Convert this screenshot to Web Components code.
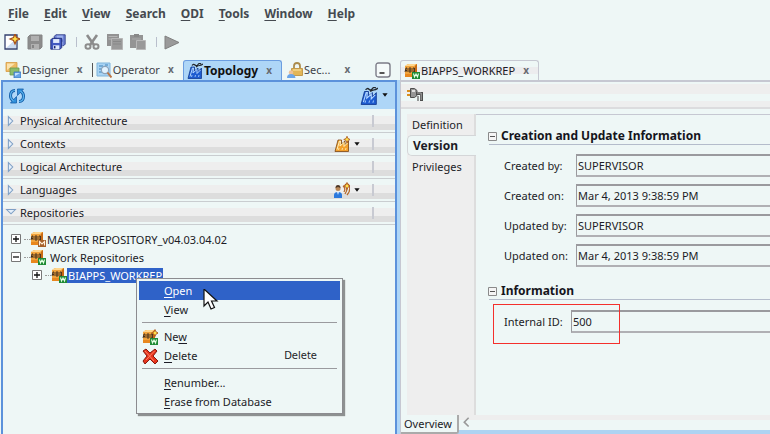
<!DOCTYPE html>
<html lang="en">
<head>
<meta charset="utf-8">
<title>ODI Topology</title>
<style>
html, body { margin: 0; height: 100%; }
body { background: #eef7f6; overflow: hidden; color: #1c1c26; font: 11px/16px "Noto Sans", "Open Sans", sans-serif; }
</style>
</head>
<body>
<odi-app></odi-app>
<script>
const define = (name, css, html, setup) => customElements.define(name, class extends HTMLElement {
  connectedCallback() {
    if (this.shadowRoot) return;
    const root = this.attachShadow({ mode: 'open' });
    const attr = key => this.getAttribute(key) || '';
    root.innerHTML = `<style>*{box-sizing:border-box}button{font:inherit;color:inherit;background:none;border:0;margin:0;padding:0;text-align:left}u{text-underline-offset:2px}${css}</style>` +
      (typeof html === 'function' ? html(attr) : html);
    if (setup) setup(this, root);
  }
});

const repo = (badge) => `<path d="M1 3l3-2h9v10l-2 3H1z" fill="#f1a33c"/><path d="M2 2l3-1h7l-2 2H2z" fill="#ffd68c"/><path d="M11 3l2-2v10l-2 3z" fill="#c96a12"/><path d="M1 11h10v3H1z" fill="#e8871e"/><path d="M1 9l1-4h1v4M1 7.500h2M5 9V5h2v4H5m0-2h2M9 5v4m0-4h1.500v4H9" fill="none" stroke="#3c2a1c" stroke-width=".9"/>${badge}`;
const greenBadge = '<path d="M8 9h8v7H8z" fill="#1f8a35"/><path d="M9.500 10.500l1 3.500 1.500-3 1.500 3 1-3.500" fill="none" stroke="#e4ffe4" stroke-width="1.100"/>';
const brownBadge = '<path d="M8 9h8v7H8z" fill="#a5602a"/><path d="M9.500 14.500v-4l2.500 2.500 2.500-2.500v4" fill="none" stroke="#fff0dc" stroke-width="1.100"/>';
const factory = (fill, light, dark) => `<path d="M1 15.500L4 4h3.500L7.500 8l3.500-3v3.500L14.500 5v10.500z" fill="${fill}" stroke="${dark}" stroke-width=".8"/><path d="M3 13.500L5.500 5h1l-.5 5 4-3.500v4l3.500-3.500" fill="none" stroke="${light}" stroke-width="1"/><path d="M4.500 14l.5-2m3 2l.5-2m3 2l.5-2" stroke="${light}" stroke-width=".8"/>`;
const smoke = '<path d="M5 2.500q1.500-2 3-.5t3-.5 3-.5M9 4q2-1.500 3.500-1.500T16 1" fill="none" stroke="#23272c" stroke-width="1.200"/>';
const floppy = (x, y, s, body, dark, label) => `<g transform="translate(${x} ${y}) scale(${s})"><path d="M1 3l2-2h12v12l-2 2H1z" fill="${body}" stroke="${dark}"/><path d="M4 2h8v5H4z" fill="${label}"/><path d="M4 10h8v5H4z" fill="${label}"/><path d="M5 11h2v3H5z" fill="${dark}"/></g>`;
const star = (x, y, s) => `<path transform="translate(${x} ${y}) scale(${s})" d="M0-5L1.500-1.500 5 0 1.500 1.500 0 5-1.500 1.500-5 0-1.500-1.500z" fill="#ffe14a" stroke="#a8501a" stroke-width="1.200"/>`;
const icons = {
  new: `<path d="M1 1h12v14H1z" fill="#fff" stroke="#33406f" stroke-width="1.300"/><path d="M2 14L12 5v9z" fill="#cddcf2"/>${star(11, 5, 1)}`,
  save: floppy(0, 0, 1, '#8c8c8c', '#858585', '#b0b0b0'),
  saveAll: floppy(3.5, 0, 0.78, '#6f83d4', '#1d2a7c', '#9db2ee') + floppy(0, 3.5, 0.78, '#4058c0', '#141f6c', '#dfeafc'),
  cut: '<path d="M3 1l7 10M13 1L6 11" stroke="#8c8c8c" stroke-width="2.600"/><g fill="none" stroke="#8c8c8c" stroke-width="2"><ellipse cx="4" cy="12.500" rx="2.500" ry="2.300"/><ellipse cx="12" cy="12.500" rx="2.500" ry="2.300"/></g>',
  copy: '<path d="M0 0h12v12H0z" fill="#929292"/><path d="M1.500 2.500h9M1.500 5h8" stroke="#b5b5b5"/><path d="M4.500 4.500h11v11h-11z" fill="#9a9a9a" stroke="#b5b5b5"/><path d="M6 7.500h8M6 10h8" stroke="#888"/>',
  paste: '<path d="M0 1h13v13H0z" fill="#949494"/><path d="M4 0h5v3H4z" fill="#888"/><path d="M6.500 6.500h9v9h-9z" fill="#999" stroke="#b8b8b8"/><path d="M2 5h9" stroke="#aaa"/>',
  play: '<path d="M1 2l14 6.500L1 15z" fill="#9a9a9a" stroke="#808080"/>',
  designer: '<path d="M1 0.500h11v9H1z" fill="#eebb63" stroke="#d59a42" stroke-width=".8"/><path d="M2 1.500h8L2 8z" fill="#fbe3ae"/><path d="M5 6h9v7H5z" fill="#8dbd6a" stroke="#69984e" stroke-width=".8"/><path d="M9 10h7v6H9z" fill="#68a5e5" stroke="#3a75bd" stroke-width=".8"/><path d="M10 11h5l-5 3z" fill="#c2e0ff"/>',
  operator: '<path d="M1 1h13v13H1z" fill="#a9d4f4" stroke="#7fb4dc"/><path d="M3 4h4M3 7h3M3 10h3M9 3h3" stroke="#3d83ba"/><circle cx="9" cy="8" r="3.600" fill="#e2f3ff" stroke="#8ca3ba" stroke-width="1.200"/><path d="M11.500 10.500l4 5" stroke="#bd7645" stroke-width="2"/>',
  topology: factory('#1d5bd0', '#b2d6ff', '#123a92') + smoke,
  security: '<path d="M7 7V4q0-3 3-3t3 3v3" fill="none" stroke="#ab8c4d" stroke-width="1.800"/><path d="M4.500 6.500h11v7h-11z" fill="#e2b657" stroke="#c39a4c"/><path d="M6 8h8" stroke="#fae6a8"/><circle cx="4" cy="10.500" r="2.200" fill="#edc199"/><path d="M0 16q0-4 4-4t4.500 4z" fill="#6ba5e8"/>',
  refresh: '<path d="M6 2.500Q1.500 2.500 1.500 8q0 3 3 5M10 13.500q4.500 0 4.500-5.500 0-3-3-5" fill="none" stroke="#145da8" stroke-width="3"/><path d="M1.500 15h6V8.500zM14.500 1h-6v6.500z" fill="#2f8fdb" stroke="#145da8" stroke-width=".8"/><path d="M6 2.500Q1.500 2.500 1.500 8q0 3 3 5M10 13.500q4.500 0 4.500-5.500 0-3-3-5" fill="none" stroke="#5cb6f0" stroke-width="1.200"/>',
  context: factory('#f3a02c', '#fff2bf', '#7a4614') + star(13, 3.500, 0.65),
  language: '<circle cx="4" cy="6.500" r="2.500" fill="#b88758"/><path d="M1.500 6q0-3 2.500-3t2.500 3L4 5z" fill="#4e3826"/><path d="M0 16v-3q0-3 4-3t4 3v3z" fill="#2c79dd"/><path d="M3 10h2l-1 3z" fill="#d8ebff"/><path d="M9 4q3 2 1 6M11 2q4 4 0 10M14 2q4 5-1 11" fill="none" stroke="#b76b2b" stroke-width="1.300"/>' + star(13, 4, 0.7),
  master: repo(brownBadge),
  work: repo(greenBadge),
  newRepo: repo(greenBadge) + star(13, 4, 0.7),
  delete: '<path d="M1 3l3-2 4 4 5-4 2 2-4 5 5 5-3 3-5-5-5 5-2-3 4-5z" fill="#e8341c" stroke="#86190d"/><path d="M3 3l9 10M12.500 3L4 12" stroke="#ff8064" stroke-width="1"/>',
  plug: '<path d="M0 4h4M0 8h4" stroke="#d98e1f" stroke-width="1.800"/><path d="M3.500 1.500h4l2.500 2v5l-2.500 2h-4z" fill="#969696" stroke="#4d4d4d"/><path d="M5 3h3v2H5z" fill="#e0e0e0"/><path d="M9 6.500h5.500V14" fill="none" stroke="#4d4d4d" stroke-width="3"/><path d="M10 6h4.200v7" fill="none" stroke="#aaa" stroke-width="1"/><path d="M11 9v5" stroke="#777" stroke-width="1.500"/>',
  right: '<path d="M5 3l5 5-5 5z" fill="#e5effa" stroke="#7e9fc5" stroke-width="1.200"/>',
  down: '<path d="M3 4h10l-5 5z" fill="#e5effa" stroke="#7e9fc5" stroke-width="1.200"/>',
  plus: '<path d="M3.500 3.500h9v9h-9z" fill="#fff" stroke="#777"/><path d="M5 8h6M8 5v6" stroke="#111" stroke-width="1.300"/>',
  minus: '<path d="M3.500 3.500h9v9h-9z" fill="#fff" stroke="#777"/><path d="M5 8h6" stroke="#111" stroke-width="1.300"/>',
  fold: '<path d="M3.500 4.500h8v8h-8z" fill="#f5f5f5" stroke="#8a8a8a"/><path d="M5 8.500h5" stroke="#555" stroke-width="1"/>',
  minimize: '<path d="M3.500 1h9q2.500 0 2.500 2.500v9q0 2.500-2.500 2.500h-9Q1 15 1 12.500v-9Q1 1 3.500 1z" fill="#f5fafa" stroke="#7c7c88" stroke-width="1.400"/><path d="M4.500 11h5" stroke="#555" stroke-width="2"/>',
  less: '<path d="M11 2L6 7 11 12" fill="none" stroke="#999" stroke-width="1.800"/>',
  caret: '<path d="M5 6h6l-3 4z" fill="#111"/>',
  pointer: '<path d="M1 0v17l4-4 3 7 3.500-1.500-3-6.500H14z" fill="#fff" stroke="#111" stroke-width="1.200"/>'
};
define('odi-icon', ':host{display:block;flex:none;width:16px;height:16px}svg{display:block;width:100%;height:100%}',
  a => `<svg viewBox="0 0 ${a('name') === 'pointer' ? '16 21' : '16 16'}" aria-hidden="true">${icons[a('name')]}</svg>`);

define('odi-menubar', ':host{display:flex;gap:15px;padding:6px 8px;font-weight:700;font-size:12px;color:#454a50}',
  () => ['File', 'Edit', 'View', 'Search', 'ODI', 'Tools', 'Window', 'Help'].map(t => `<button><u>${t[0]}</u>${t.slice(1)}</button>`).join(''));

define('odi-toolbar', ':host{display:flex;align-items:center;height:28px;padding:0 4px;gap:7px}i{width:1px;height:10px;background:#b9bfcc;margin-left:3px}',
  '<button aria-label="New"><odi-icon name="new"></odi-icon></button><button aria-label="Save"><odi-icon name="save"></odi-icon></button><button aria-label="Save all"><odi-icon name="saveAll"></odi-icon></button><i></i><button aria-label="Cut"><odi-icon name="cut"></odi-icon></button><button aria-label="Copy"><odi-icon name="copy"></odi-icon></button><button aria-label="Paste"><odi-icon name="paste"></odi-icon></button><i></i><button aria-label="Run"><odi-icon name="play"></odi-icon></button>');

define('odi-tab', `:host{display:flex;align-items:center;height:20px;padding:0 8px 0 3px;gap:7px}
  .label{display:flex;align-items:center;gap:1px;color:#3e4248}.close{font-weight:700;font-size:10px;color:#666a70;width:8px;text-align:center;line-height:12px;padding-bottom:2px}
  :host([active]){border:1px solid #6b9de0;border-bottom:0;border-radius:3px 3px 0 0;background:#aed6f7;height:22px;margin-bottom:-2px;padding-bottom:2px}
  :host([active]) .label{font-weight:700;font-size:12px;color:#111}
  :host([plain]) .label{color:#1c1c26}
  :host([plain]){border:1px solid #c6c8d2;border-bottom:0;border-radius:3px 3px 0 0;background:linear-gradient(#eef7f6 30%,#ececee 30% 60%,#eef7f6 60%);height:22px;margin-bottom:-2px;padding-bottom:2px}`,
  a => `<button class="label" role="tab"><odi-icon name="${a('icon')}"></odi-icon><span><slot></slot></span></button><button class="close" aria-label="Close">x</button>`);

define('odi-section', `:host{display:flex;align-items:center;height:23px;flex:none;padding:0 21px 0 1px;border-bottom:1px solid #c9cdd0;background:linear-gradient(#eef7f6 0 6px,#eee 6px 14px,#ddd 14px 20px,#eef7f6 20px)}
  .head{display:flex;align-items:center;flex:1;gap:2px}.tool{display:flex;align-items:center;margin-right:8px}.tool odi-icon+odi-icon{width:14px}i{width:2px;height:12px;background:#c8cad2}odi-icon[name=right],odi-icon[name=down]{width:14px}`,
  a => `<button class="head"><odi-icon name="${a('state') || 'right'}"></odi-icon><slot></slot></button>${a('tool') ? `<button class="tool" aria-label="Add"><odi-icon name="${a('tool')}"></odi-icon><odi-icon name="caret"></odi-icon></button>` : ''}<i></i>`);

define('odi-node', `:host{display:flex;align-items:center;height:18px;padding-left:5px}:host([level="2"]){padding-left:26px}
  .dots{width:6px;border-top:1px dotted #999}button{display:flex}.name{line-height:15px;padding:0 1px}:host([spaced]) .name{padding-left:4px}:host([selected]) .name{background:#2f62c8;color:#fff}`,
  a => `<button aria-label="Toggle"><odi-icon name="${a('toggle')}"></odi-icon></button><span class="dots"></span><odi-icon name="${a('icon')}"></odi-icon><button class="name"><slot></slot></button>`);

define('odi-navigator', `:host{display:flex;flex-direction:column;min-width:0}.tabs{display:flex;align-items:flex-end;height:24px;padding-left:2px}.tabs odi-tab:first-child{border-right:1px solid #555;height:14px;margin-bottom:3px}
  .tabs .min{margin:0 6px 2px auto}.panel{flex:1;border:solid #5c92db;border-width:2px 2px 0;margin-left:1px;display:flex;flex-direction:column}
  .bar{display:flex;justify-content:space-between;align-items:center;height:27px;flex:none;background:#aed6f7;padding:0 3px 0 5px}.bar button{display:flex}.bar odi-icon[name=refresh]{width:18px}.bar odi-icon[name=topology]{width:18px;height:18px}.bar odi-icon[name=caret]{width:14px}
  .sections{padding-top:1px}.tree{padding-top:5px}.tabs odi-tab:last-of-type{padding-right:0;margin-left:2px;gap:13px}`,
  `<div class="tabs" role="tablist"><odi-tab icon="designer">Designer</odi-tab><odi-tab icon="operator">Operator</odi-tab><odi-tab icon="topology" active>Topology</odi-tab><odi-tab icon="security">Sec...</odi-tab><button class="min" aria-label="Minimize"><odi-icon name="minimize"></odi-icon></button></div>
  <div class="panel"><div class="bar"><button aria-label="Refresh"><odi-icon name="refresh"></odi-icon></button><button aria-label="Connect"><odi-icon name="topology"></odi-icon><odi-icon name="caret"></odi-icon></button></div>
  <div class="sections"><odi-section>Physical Architecture</odi-section><odi-section tool="context">Contexts</odi-section><odi-section>Logical Architecture</odi-section><odi-section tool="language">Languages</odi-section><odi-section state="down">Repositories</odi-section></div>
  <div class="tree"><odi-node toggle="plus" icon="master">MASTER REPOSITORY_v04.03.04.02</odi-node><odi-node toggle="minus" icon="work" spaced>Work Repositories</odi-node><odi-node toggle="plus" icon="work" level="2" selected>BIAPPS_WORKREP</odi-node></div></div>`);

define('odi-heading', ':host{display:flex;align-items:center;height:18px;border-bottom:1px solid #b4bccb;margin-left:13px;font-weight:700;font-size:12px;color:#15151c}h2{font:inherit;margin:0}button{margin-left:-4px}',
  '<button aria-label="Collapse"><odi-icon name="fold"></odi-icon></button><h2><slot></slot></h2>');

define('odi-field', `:host{display:flex;align-items:center;height:23px;padding-left:28px}label{width:72px;flex:none}:host([narrow]) label{width:67px}
  input{flex:1;min-width:0;height:23px;font:inherit;color:inherit;background:transparent;border:solid #9a9a9e;border-width:2px 0 2px 2px;border-bottom-color:#b0b0b4;border-left-width:1px;padding:0 0 1px 1px;outline:0;border-radius:0}`,
  a => `<label for="value">${a('label')}</label><input id="value" type="text" readonly value="${a('value')}">`);

define('odi-editor', `:host{display:flex;flex-direction:column;min-width:0}.tabs{display:flex;align-items:flex-end;height:24px}.frame{flex:1;display:flex;flex-direction:column;border:solid #c6c8d2;border-width:2px 0 0 1px;min-height:0}
  .bar{height:27px;flex:none;display:flex;align-items:center;padding:0 5px;border-bottom:2px solid #dcdcde;background:linear-gradient(#eef7f6 0 2px,#eee 2px 12px,#eef7f6 12px 19px,#eee 19px)}
  .bar odi-icon{width:18px}.body{flex:1;display:flex;margin-top:5px;padding-left:6px;min-height:0}
  nav{width:69px;flex:none;background:#eee;border-right:2px solid #ddd;display:flex;flex-direction:column}nav button{height:21px;padding-left:5px}nav button.on{margin-right:-2px;font-weight:700;font-size:12px;background:#eef7f6;border:1px solid #d4d6d8;border-right:0;border-radius:5px 0 0 5px}
  .form{flex:1;min-width:0;border-top:1px solid #c6c8d2;display:flex;flex-direction:column}.fields{display:grid;gap:7px;margin:9px 0 15px}odi-heading:first-child{margin-top:12px}
  .mark{position:relative;margin-top:10px}.mark i{position:absolute;left:17px;top:-6px;width:127px;height:40px;border:1px solid #f4302c;pointer-events:none}
  .foot{display:flex;height:15px;flex:none;background:linear-gradient(#eee 5px,#eef7f6 5px)}.foot .over{height:19px;padding:0 5px 0 3px;border:solid #aaa;border-width:0 2px 2px 0;border-radius:0 0 3px 0;background:#eef7f6;z-index:1}.foot odi-icon{width:14px;height:14px}.edge{height:4px;flex:none;background:#aed3f2}`,
  `<div class="tabs" role="tablist"><odi-tab icon="work" plain>BIAPPS_WORKREP</odi-tab></div>
  <div class="frame"><div class="bar"><button aria-label="Test connection"><odi-icon name="plug"></odi-icon></button></div>
  <div class="body"><nav><button>Definition</button><button class="on">Version</button><button>Privileges</button></nav>
  <div class="form"><odi-heading>Creation and Update Information</odi-heading>
  <div class="fields"><odi-field label="Created by:" value="SUPERVISOR"></odi-field><odi-field label="Created on:" value="Mar 4, 2013 9:38:59 PM"></odi-field><odi-field label="Updated by:" value="SUPERVISOR"></odi-field><odi-field label="Updated on:" value="Mar 4, 2013 9:38:59 PM"></odi-field></div>
  <odi-heading>Information</odi-heading><div class="mark"><odi-field narrow label="Internal ID:" value="500"></odi-field><i></i></div></div></div>
  <div class="foot"><button class="over">Overview</button><button aria-label="Scroll left"><odi-icon name="less"></odi-icon></button></div><div class="edge"></div></div>`);

define('odi-menuitem', `:host{display:block}button{display:flex;align-items:center;width:100%;height:19px;padding:0 23px 0 3px}.ico{width:22px;flex:none}.text{flex:1}kbd{font:10px "DejaVu Sans",sans-serif}:host([active]) button{background:#2f62c8;color:#fff}`,
  a => `<button role="menuitem"><span class="ico">${a('icon') ? `<odi-icon name="${a('icon')}"></odi-icon>` : ''}</span><span class="text"><slot></slot></span>${a('key') ? `<kbd>${a('key')}</kbd>` : ''}</button>`);

define('odi-context-menu', `:host{display:block;background:#eef7f6;border:1px solid #8c8c90;padding:2px;box-shadow:2px 2px 1px #8d9191}hr{margin:3px 3px 4px;border:0;border-top:1px solid #9a9a9e}`,
  `<odi-menuitem active><u>O</u>pen</odi-menuitem><odi-menuitem><u>V</u>iew</odi-menuitem><hr><odi-menuitem icon="newRepo">Ne<u>w</u></odi-menuitem><odi-menuitem icon="delete" key="Delete"><u>D</u>elete</odi-menuitem><hr><odi-menuitem><u>R</u>enumber...</odi-menuitem><odi-menuitem><u>E</u>rase from Database</odi-menuitem>`);

define('odi-app', `:host{display:flex;flex-direction:column;height:100vh;position:relative}main{flex:1;display:grid;grid-template-columns:397px 3px 1fr;min-height:0}.split{background:linear-gradient(#eef7f6 24px,#aed6f7 24px);margin:0}
  odi-context-menu{position:absolute;left:136px;top:278px;width:207px}odi-icon{position:absolute;left:203px;top:289px;width:16px;height:21px}`,
  `<odi-menubar></odi-menubar><odi-toolbar></odi-toolbar><main><odi-navigator></odi-navigator><div class="split"></div><odi-editor></odi-editor></main><odi-context-menu></odi-context-menu><odi-icon name="pointer"></odi-icon>`);
</script>
</body>
</html>
